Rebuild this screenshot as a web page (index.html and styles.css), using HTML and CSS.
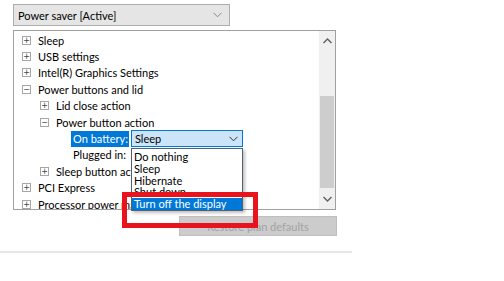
FILE: index.html
```html
<!DOCTYPE html>
<html lang="en">
<head>
    <meta charset="UTF-8">
    <title>Power Options - Advanced settings</title>
    <link rel="stylesheet" href="styles.css">
</head>
<body>
    <div class="plan-select">
        <span>Power saver [Active]</span>
        <svg class="chevron" width="9" height="6" viewBox="0 0 9 6"><path d="M0.5 0.8 L4.5 4.8 L8.5 0.8" fill="none" stroke="#888" stroke-width="1"/></svg>
    </div>

    <div class="tree">
        <ul class="tree-list">
            <li class="lvl1"><span class="box">+</span>Sleep</li>
            <li class="lvl1"><span class="box">+</span>USB settings</li>
            <li class="lvl1"><span class="box">+</span>Intel(R) Graphics Settings</li>
            <li class="lvl1"><span class="box">&minus;</span>Power buttons and lid</li>
            <li class="lvl2"><span class="box">+</span>Lid close action</li>
            <li class="lvl2"><span class="box">&minus;</span>Power button action</li>
            <li class="lvl3">
                <span class="setting-label selected">On battery:</span>
                <span class="combo">
                    <span>Sleep</span>
                    <svg width="9" height="6" viewBox="0 0 9 6"><path d="M0.5 0.8 L4.5 4.8 L8.5 0.8" fill="none" stroke="#333" stroke-width="1"/></svg>
                </span>
            </li>
            <li class="lvl3"><span class="setting-label">Plugged in:</span></li>
            <li class="lvl2"><span class="box">+</span>Sleep button action</li>
            <li class="lvl1"><span class="box">+</span>PCI Express</li>
            <li class="lvl1"><span class="box">+</span>Processor power management</li>
        </ul>
        <div class="scrollbar">
            <svg class="arrow" width="9" height="6" viewBox="0 0 9 6"><path d="M0.5 5 L4.5 1 L8.5 5" fill="none" stroke="#606060" stroke-width="1.4"/></svg>
            <div class="track">
                <div class="thumb"></div>
            </div>
            <svg class="arrow" width="9" height="6" viewBox="0 0 9 6"><path d="M0.5 1 L4.5 5 L8.5 1" fill="none" stroke="#606060" stroke-width="1.4"/></svg>
        </div>
    </div>

    <button class="restore" disabled>Restore plan defaults</button>
    <div class="divider"></div>

    <ul class="popup">
        <li>Do nothing</li>
        <li>Sleep</li>
        <li>Hibernate</li>
        <li>Shut down</li>
        <li class="current">Turn off the display</li>
    </ul>

    <div class="callout"></div>
</body>
</html>
```

FILE: styles.css
```css
body {
    margin: 0;
    background: #fff;
    font-family: Lato, "Noto Sans", sans-serif;
    font-size: 11px;
    color: #000;
    position: relative;
    width: 504px;
    height: 281px;
    overflow: hidden;
}
.plan-select {
    margin: 4px 0 0 13px;
    width: 217px;
    height: 22px;
    box-sizing: border-box;
    background: #e5e5e5;
    border: 1px solid #adadad;
    display: flex;
    align-items: center;
    justify-content: space-between;
    padding: 0 7px 0 4px;
}
.tree {
    margin: 4px 0 0 13px;
    width: 323px;
    height: 180px;
    box-sizing: border-box;
    border: 1px solid #a0a0a0;
    display: flex;
    overflow: hidden;
}
.tree-list {
    flex: 1;
    list-style: none;
    margin: 0;
    padding: 1px 0 0 0;
    white-space: nowrap;
    overflow: hidden;
}
.tree-list li {
    height: 16.4px;
    display: flex;
    align-items: center;
}
.lvl1 { padding-left: 8px; }
.lvl2 { padding-left: 26px; }
.lvl3 { padding-left: 57px; }
.box {
    width: 7px;
    height: 7px;
    border: 1px solid #a6a6a6;
    margin-right: 7px;
    font-size: 8px;
    line-height: 7px;
    text-align: center;
    color: #444;
    font-family: "DejaVu Sans", sans-serif;
}
.setting-label {
    width: 58px;
    box-sizing: border-box;
    padding-left: 2px;
    height: 16px;
    line-height: 16px;
}
.selected {
    background: #0078d7;
    color: #fff;
}
.combo {
    margin-left: 2px;
    width: 112px;
    height: 17px;
    box-sizing: border-box;
    background: #cce4f7;
    border: 1px solid #0078d7;
    display: flex;
    align-items: center;
    justify-content: space-between;
    padding: 0 4px 0 3px;
}
.scrollbar {
    width: 16px;
    background: #f0f0f0;
    display: flex;
    flex-direction: column;
    align-items: center;
}
.arrow {
    margin: 7px 0;
    flex: none;
}
.track {
    flex: 1;
    width: 100%;
    padding-top: 45px;
    box-sizing: border-box;
}
.thumb {
    width: 14px;
    margin: 0 auto;
    height: 92px;
    background: #cdcdcd;
}
.restore {
    display: block;
    margin: 6px 0 0 179px;
    width: 158px;
    height: 20px;
    background: #cccccc;
    border: 1px solid #bfbfbf;
    color: #a3a3a3;
    font-family: inherit;
    font-size: 11px;
    padding: 0;
}
.divider {
    margin-top: 15px;
    width: 352px;
    height: 2px;
    background: #e6e6e6;
}
.popup {
    position: absolute;
    left: 131px;
    top: 148px;
    width: 112px;
    margin: 0;
    padding: 2px 0 0 0;
    list-style: none;
    background: #fff;
    border: 1px solid #4f6070;
    box-sizing: border-box;
    box-shadow: 2px 2px 3px rgba(0, 0, 0, 0.25);
}
.popup li {
    height: 11.8px;
    line-height: 12px;
    padding-left: 2px;
}
.popup .current {
    background: #0078d7;
    color: #fff;
}
.callout {
    position: absolute;
    left: 122px;
    top: 192px;
    width: 136px;
    height: 36px;
    box-sizing: border-box;
    border: 5px solid #e8131d;
}
```
